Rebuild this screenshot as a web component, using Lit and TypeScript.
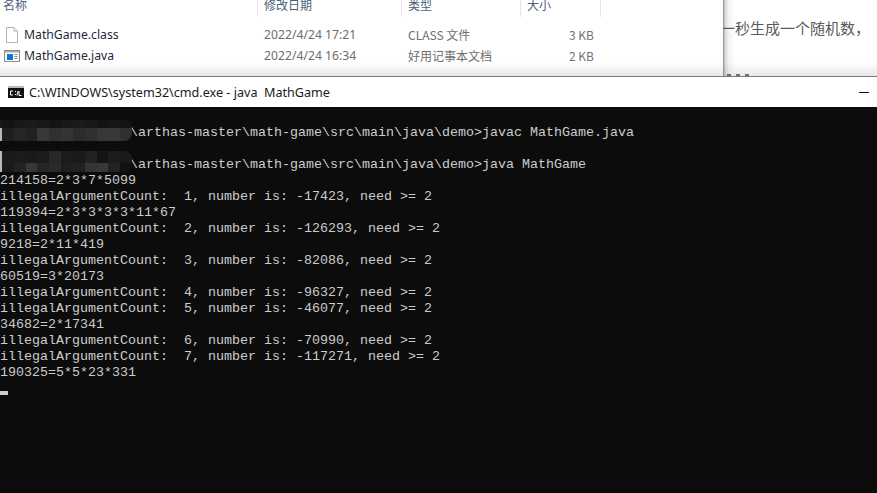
import { LitElement, html, css, svg } from "lit";
import { customElement } from "lit/decorators.js";

const LINES = [
  "",
  "@\\arthas-master\\math-game\\src\\main\\java\\demo>javac MathGame.java",
  "",
  "#\\arthas-master\\math-game\\src\\main\\java\\demo>java MathGame",
  "214158=2*3*7*5099",
  "illegalArgumentCount:  1, number is: -17423, need >= 2",
  "119394=2*3*3*3*3*11*67",
  "illegalArgumentCount:  2, number is: -126293, need >= 2",
  "9218=2*11*419",
  "illegalArgumentCount:  3, number is: -82086, need >= 2",
  "60519=3*20173",
  "illegalArgumentCount:  4, number is: -96327, need >= 2",
  "illegalArgumentCount:  5, number is: -46077, need >= 2",
  "34682=2*17341",
  "illegalArgumentCount:  6, number is: -70990, need >= 2",
  "illegalArgumentCount:  7, number is: -117271, need >= 2",
  "190325=5*5*23*331",
];

const MOSAIC_A = [
  "#141414", "#181818", "#1a1a1a", "#181818", "#141414", "#181818", "#1a1a1a", "#181818", "#141414", "#161616", "#141414",
  "#1e1e1e", "#262626", "#222222", "#383838", "#303030", "#343434", "#2c2c2c", "#303030", "#383838", "#383838", "#303030",
];
const MOSAIC_B = [
  "#1a1a1a", "#1c1c1c", "#1a1a1a", "#1c1c1c", "#282828", "#1c1c1c", "#1a1a1a", "#222222", "#141414", "#1c1c1c", "#1a1a1a",
  "#1a1a1a", "#222222", "#383838", "#262626", "#2a2a2a", "#1e1e1e", "#202020", "#343434", "#383838", "#222222", "#121212",
];

@customElement("app-root")
export class AppRoot extends LitElement {
  static styles = css`
    :host { display: block; width: 877px; height: 493px; overflow: hidden; background: #fff; }
    .top { display: flex; height: 76px; }
    .explorer { width: 723px; flex: none; background: #fff; position: relative; z-index: 1;
      font: 12px "Noto Sans CJK SC", sans-serif; color: #6d6d6d; overflow: hidden; }
    .explorer::after { content: ""; position: absolute; left: 0; right: 0; bottom: 0; height: 14px;
      background: linear-gradient(rgba(0,0,0,0), rgba(0,0,0,.09)); }
    .cols, .row { display: grid; grid-template-columns: 258px 144px 119px 80px; }
    .cols { height: 18px; margin-top: -1px; line-height: 12px; color: #4c607a; }
    .cols > div { padding-left: 6px; border-right: 1px solid #e5e5e5; height: 18px; margin-top: 0; overflow: hidden; }
    .cols > div:first-child { padding-left: 3px; }
    .rows { padding-top: 7px; }
    .row { height: 21px; align-items: center; line-height: 21px; font-family: "Noto Sans CJK SC", sans-serif; }
    .row > div { padding-left: 6px; white-space: nowrap; }
    .name { display: flex; align-items: center; gap: 4px; color: #1d2a3a; font: 12.2px "Noto Sans", "Open Sans", sans-serif; padding-left: 4px !important; }
    .name svg { flex: none; width: 16px; height: 16px; }
    .size { padding-left: 0 !important; text-align: right; padding-right: 7px; color: #6d7480; }
    .date { font: 12.2px "Noto Sans", sans-serif; color: #6d6d6d; }
    .page { flex: 1; position: relative; overflow: hidden; font: 15px "Noto Sans CJK SC", sans-serif; color: #5a5a5a; white-space: nowrap;
      background: linear-gradient(90deg, #8a8a8a 0, #d8d8d8 2px, #f4f4f4 6px, #fff 12px); }
    .page::after { content: ""; position: absolute; left: 0; right: 0; bottom: 0; height: 14px;
      background: linear-gradient(rgba(0,0,0,0), rgba(0,0,0,.09)); }
    .page::before { content: ""; position: absolute; left: 4px; bottom: 0; width: 26px; height: 2px;
      background: repeating-linear-gradient(90deg, #777 0 4px, transparent 4px 9px); }
    .page p { margin: 16px 0 0 -3px; line-height: 24px; }
    .window { border-top: 1px solid #7a7a7a; }
    .title { height: 30px; background: #fff; display: flex; align-items: center; padding-left: 8px; gap: 5px;
      font: 12.6px "Noto Sans", sans-serif; color: #1a1a1a; white-space: pre; }
    .title svg { flex: none; width: 16px; height: 12px; }
    .spacer { flex: 1; }
    .min { width: 10px; height: 1px; background: #111; margin-right: 8px; }
    .console { height: 384px; padding-top: 2px; background: #0c0c0c; color: #cccccc; font: 13.33px/16px "Liberation Mono", monospace; }
    .line { height: 16px; display: flex; white-space: pre; }
    .mosaic { width: 132px; height: 21px; flex: none; display: grid; position: relative;
      grid-template-columns: repeat(11, 1fr); border-radius: 0 8px 8px 0; overflow: hidden;
      padding-left: 2px; box-sizing: border-box; background: #1a1a1a; margin-right: -2px; }
    .mosaic.a { margin-top: -5px; grid-template-rows: 8px 13px; }
    .mosaic.b { margin-top: -6px; grid-template-rows: 12px 9px; }
    .bar { position: absolute; left: 0; bottom: 0; width: 2px; background: #b8b8b8; }
    .mosaic.a .bar { height: 13px; }
    .mosaic.b .bar { height: 21px; }
    .cursor { width: 8px; height: 4px; background: #ccc; margin-top: 10px; }
  `;

  private fileIcon() {
    return html`<svg viewBox="0 0 16 16"><path d="M2.5 .5H10L13.5 4V15.5H2.5Z" fill="#fff" stroke="#b4b4b4"/><path d="M10 .5V4H13.5" fill="#f0f0f0" stroke="#b4b4b4"/></svg>`;
  }
  private noteIcon() {
    return html`<svg viewBox="0 0 16 16"><rect x=".5" y="2.5" width="15" height="11" fill="#fff" stroke="#8c8c8c"/><rect x="1" y="3" width="14" height="1.5" fill="#a8a8a8"/><rect x="3" y="6" width="6" height="6" fill="#0a78d7"/><path d="M10.5 6.5h3M10.5 8.5h3M10.5 10.5h3" stroke="#8c8c8c"/></svg>`;
  }
  private cmdIcon() {
    return html`<svg viewBox="0 0 16 12"><rect width="16" height="12" fill="#111"/><rect width="16" height="2" fill="#bbb"/>${svg`<path d="M5 5H2.5V9H5M7 5.5h1M7 8.5h1M10 5L9 9.5M13.5 9.5H11V5" fill="none" stroke="#fff"/>`}</svg>`;
  }

  private line(text: string) {
    if (text.startsWith("@") || text.startsWith("#")) {
      const a = text.startsWith("@");
      return html`<div class="line"><div class="mosaic ${a ? "a" : "b"}">${(a ? MOSAIC_A : MOSAIC_B).map((c) => html`<i style="background:${c}"></i>`)}<div class="bar"></div></div><span>${text.slice(1)}</span></div>`;
    }
    return html`<div class="line">${text}</div>`;
  }

  render() {
    return html`
      <div class="top">
        <div class="explorer">
          <div class="cols"><div>名称</div><div>修改日期</div><div>类型</div><div>大小</div></div>
          <div class="rows">
            <div class="row">
              <div class="name">${this.fileIcon()}MathGame.class</div><div class="date">2022/4/24 17:21</div><div>CLASS 文件</div><div class="size">3 KB</div>
            </div>
            <div class="row">
              <div class="name">${this.noteIcon()}MathGame.java</div><div class="date">2022/4/24 16:34</div><div>好用记事本文档</div><div class="size">2 KB</div>
            </div>
          </div>
        </div>
        <div class="page"><p>一秒生成一个随机数，</p></div>
      </div>
      <div class="window">
        <div class="title">${this.cmdIcon()}<span>C:\\WINDOWS\\system32\\cmd.exe - java  MathGame</span><div class="spacer"></div><div class="min"></div></div>
        <div class="console">
          ${LINES.map((l) => this.line(l))}
          <div class="line"><div class="cursor"></div></div>
        </div>
      </div>
    `;
  }
}
